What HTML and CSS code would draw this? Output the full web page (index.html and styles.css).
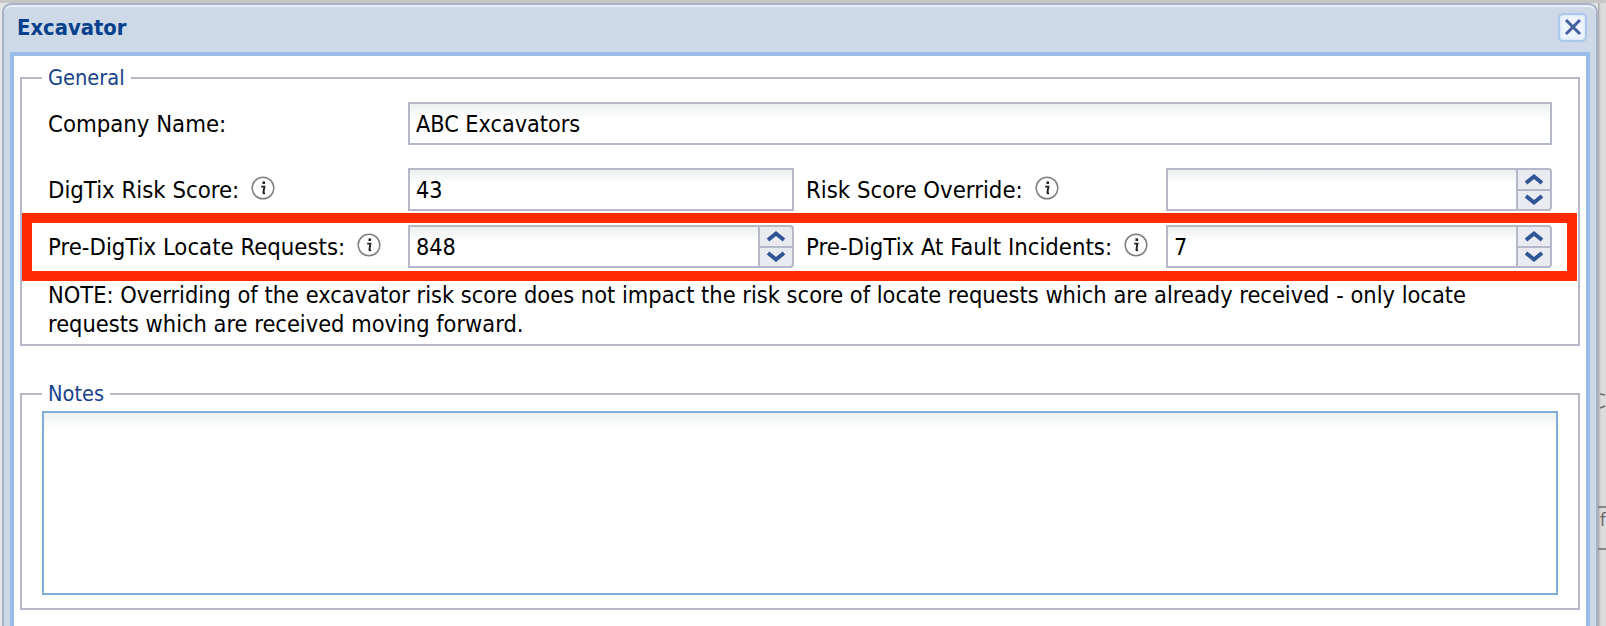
FILE: index.html
```html
<!DOCTYPE html>
<html lang="en">
<head>
<meta charset="utf-8">
<title>Excavator</title>
<link rel="stylesheet" href="styles.css">
</head>
<body>
<div class="page">
  <div class="window">
    <header class="titlebar">
      <h1 class="title">Excavator</h1>
      <button class="close" type="button" aria-label="Close">
        <svg width="20" height="20" viewBox="0 0 20 20"><path d="M3 3 L17 17 M17 3 L3 17" stroke="#45609f" stroke-width="3" fill="none"/></svg>
      </button>
    </header>
    <main class="panel">
      <fieldset class="group group-general">
        <legend class="legend">General</legend>
        <div class="row row-name">
          <label class="label">Company Name:</label>
          <input class="field field-wide" type="text" value="ABC Excavators">
        </div>
        <div class="row row-risk">
          <label class="label">DigTix Risk Score:
            <svg class="info" width="24" height="24" viewBox="0 0 24 24"><circle cx="12" cy="12" r="10.8" fill="#fff" stroke="#808080" stroke-width="1.5"/><path d="M12.8 5.4v2.6" stroke="#222" stroke-width="2.6"/><path d="M10.2 10.6h3.2l-1 6.2q0 .8 1.6.4" stroke="#222" stroke-width="1.9" fill="none"/></svg>
          </label>
          <input class="field" type="text" value="43">
          <label class="label label-right">Risk Score Override:
            <svg class="info" width="24" height="24" viewBox="0 0 24 24"><circle cx="12" cy="12" r="10.8" fill="#fff" stroke="#808080" stroke-width="1.5"/><path d="M12.8 5.4v2.6" stroke="#222" stroke-width="2.6"/><path d="M10.2 10.6h3.2l-1 6.2q0 .8 1.6.4" stroke="#222" stroke-width="1.9" fill="none"/></svg>
          </label>
          <div class="spin">
            <input class="field spin-input" type="text" value="">
            <div class="spin-buttons">
              <span class="spin-btn"><svg width="24" height="12" viewBox="0 0 24 12"><path d="M4 10 L12 3.5 L20 10" stroke="#2f5597" stroke-width="4" fill="none"/></svg></span>
              <span class="spin-btn"><svg width="24" height="12" viewBox="0 0 24 12"><path d="M4 2 L12 8.5 L20 2" stroke="#2f5597" stroke-width="4" fill="none"/></svg></span>
            </div>
          </div>
        </div>
        <div class="row row-pre">
          <label class="label">Pre-DigTix Locate Requests:
            <svg class="info" width="24" height="24" viewBox="0 0 24 24"><circle cx="12" cy="12" r="10.8" fill="#fff" stroke="#808080" stroke-width="1.5"/><path d="M12.8 5.4v2.6" stroke="#222" stroke-width="2.6"/><path d="M10.2 10.6h3.2l-1 6.2q0 .8 1.6.4" stroke="#222" stroke-width="1.9" fill="none"/></svg>
          </label>
          <div class="spin">
            <input class="field spin-input" type="text" value="848">
            <div class="spin-buttons">
              <span class="spin-btn"><svg width="24" height="12" viewBox="0 0 24 12"><path d="M4 10 L12 3.5 L20 10" stroke="#2f5597" stroke-width="4" fill="none"/></svg></span>
              <span class="spin-btn"><svg width="24" height="12" viewBox="0 0 24 12"><path d="M4 2 L12 8.5 L20 2" stroke="#2f5597" stroke-width="4" fill="none"/></svg></span>
            </div>
          </div>
          <label class="label label-right">Pre-DigTix At Fault Incidents:
            <svg class="info" width="24" height="24" viewBox="0 0 24 24"><circle cx="12" cy="12" r="10.8" fill="#fff" stroke="#808080" stroke-width="1.5"/><path d="M12.8 5.4v2.6" stroke="#222" stroke-width="2.6"/><path d="M10.2 10.6h3.2l-1 6.2q0 .8 1.6.4" stroke="#222" stroke-width="1.9" fill="none"/></svg>
          </label>
          <div class="spin">
            <input class="field spin-input" type="text" value="7">
            <div class="spin-buttons">
              <span class="spin-btn"><svg width="24" height="12" viewBox="0 0 24 12"><path d="M4 10 L12 3.5 L20 10" stroke="#2f5597" stroke-width="4" fill="none"/></svg></span>
              <span class="spin-btn"><svg width="24" height="12" viewBox="0 0 24 12"><path d="M4 2 L12 8.5 L20 2" stroke="#2f5597" stroke-width="4" fill="none"/></svg></span>
            </div>
          </div>
          <div class="highlight"></div>
        </div>
        <p class="note">NOTE: Overriding of the excavator risk score does not impact the risk score of locate requests which are already received - only locate requests which are received moving forward.</p>
      </fieldset>
      <fieldset class="group group-notes">
        <legend class="legend">Notes</legend>
        <textarea class="notes"></textarea>
      </fieldset>
    </main>
  </div>
  <aside class="behind">
    <svg class="behind-a" width="8" height="18" viewBox="0 0 8 18"><path d="M7 2 L2 1 M2 15 L7 13" stroke="#666" stroke-width="1.6" fill="none"/></svg>
    <span class="behind-line line-1"></span>
    <span class="behind-f">f</span>
    <span class="behind-line line-2"></span>
  </aside>
</div>
</body>
</html>
```
FILE: styles.css
```css
* { box-sizing: border-box; }
html, body { margin: 0; height: 100%; overflow: hidden; }
body {
  background: #e2e2e2;
  font-family: "DejaVu Sans", "Noto Sans", sans-serif;
  font-stretch: condensed;
  font-size: 23.7px;
  color: #000;
}
.page {
  display: flex;
  height: 626px;
  background: linear-gradient(#c6c6c6 0, #c6c6c6 3px, #e6e6e6 3px);
  padding: 3px 0 0 2px;
  overflow: hidden;
}
.window {
  width: 1596px;
  height: 640px;
  flex: none;
  display: flex;
  flex-direction: column;
  background: #cdd9e7;
  border: 2px solid #a9b2c2;
  border-radius: 9px 9px 0 0;
  box-shadow: inset 0 2px 0 #e6eef7;
  padding: 0 6px;
}
.titlebar {
  height: 47px;
  flex: none;
  display: flex;
  align-items: center;
  justify-content: space-between;
  padding: 0 0 3px 7px;
}
.title {
  margin: 0;
  font: 700 21.8px "DejaVu Sans", "Noto Sans", sans-serif;
  font-stretch: condensed;
  color: #04408c;
}
.close {
  width: 29px;
  height: 29px;
  margin: 0 3px 0 0;
  padding: 0;
  display: flex;
  align-items: center;
  justify-content: center;
  background: #eef4fd;
  border: 2px solid #a9c8ee;
  border-radius: 5px;
  box-shadow: inset 0 0 3px #c4d8f3;
}
.panel {
  flex: 1;
  background: #fff;
  border: 4px solid #99bce8;
  border-bottom: 0;
  padding: 0 6px;
}
.group {
  margin: 0;
  padding: 0;
  min-width: 0;
  border: 2px solid #b5b8c8;
}
.group-general {
  height: 282px;
  margin-top: 8px;
  padding: 10px 26px 0 26px;
}
.group-notes {
  height: 230px;
  margin-top: 34px;
  padding: 3px 20px 0 20px;
}
.legend {
  padding: 0 6px;
  font-size: 21.6px;
  line-height: 28px;
  color: #15428b;
}
.group-general .legend { margin-left: -6px; }
.row {
  position: relative;
  display: grid;
  grid-template-columns: 360px 386px 372px 386px;
  align-items: center;
  height: 43px;
}
.row-name { grid-template-columns: 360px 1fr; }
.row-risk { margin-top: 23px; }
.row-pre { margin-top: 14px; }
.label {
  display: flex;
  align-items: center;
  gap: 12px;
  white-space: nowrap;
}
.label-right { padding-left: 12px; }
.info { flex: none; margin-top: -3px; }
.field {
  display: block;
  width: 100%;
  height: 43px;
  padding: 0 6px;
  margin: 0;
  border: 2px solid #b5b8c8;
  border-radius: 0;
  outline: 0;
  background: linear-gradient(#eceeef 0, #fff 14px);
  font: inherit;
  font-size: 23.2px;
  color: #000;
}
.spin { display: flex; width: 386px; height: 43px; }
.spin-input { flex: 1; min-width: 0; border-right: 0; }
.spin-buttons {
  width: 36px;
  flex: none;
  display: flex;
  flex-direction: column;
  border: 2px solid #b5b8c8;
  border-radius: 0 4px 4px 0;
  background: #e9ebf1;
}
.spin-btn {
  flex: 1;
  display: flex;
  align-items: center;
  justify-content: center;
}
.spin-btn + .spin-btn { border-top: 2px solid #b5b8c8; }
.highlight {
  position: absolute;
  left: -26px;
  right: -25px;
  top: -12px;
  bottom: -13px;
  border: 10px solid #ff2a00;
  pointer-events: none;
}
.note {
  margin: 13px 0 0 0;
  font-size: 23.4px;
  line-height: 29px;
}
.notes {
  display: block;
  width: 100%;
  height: 184px;
  margin: 0;
  padding: 6px;
  resize: none;
  outline: 0;
  border: 2px solid #7eaed9;
  border-radius: 0;
  background: linear-gradient(#eef1f1 0, #fff 16px);
  font: inherit;
}
.behind {
  position: relative;
  flex: 1;
  background: linear-gradient(90deg, #a9a9a9, #dcdcdc 3px);
}
.behind-a { position: absolute; left: 0; top: 390px; }
.behind-f {
  position: absolute;
  left: 2px;
  top: 507px;
  color: #666;
  font-size: 18px;
  line-height: 20px;
}
.behind-line {
  position: absolute;
  left: 0;
  width: 8px;
  height: 2px;
  background: #888;
}
.line-1 { top: 503px; }
.line-2 { top: 545px; }
```
